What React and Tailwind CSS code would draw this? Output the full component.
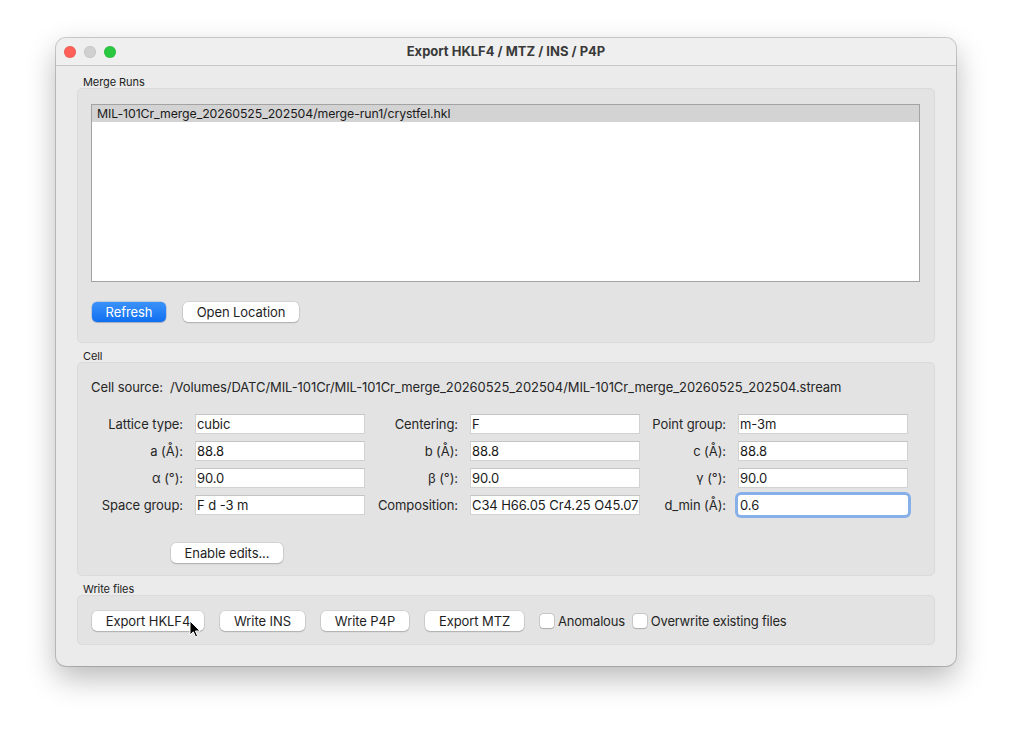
import React from "react";

function MacButton({ children, className = "" }) {
  return (
    <div
      className={
        "h-[20px] flex items-center justify-center pt-[1px] rounded-[5px] bg-white text-[13px] text-[#1e1e1e] shadow-[0_0_0_0.5px_rgba(0,0,0,0.14),0_1px_1.5px_rgba(0,0,0,0.18)] " +
        className
      }
    >
      {children}
    </div>
  );
}

function Field({ value, focused }) {
  if (focused) {
    return (
      <div className="h-[20px] rounded-[3px] bg-white shadow-[0_0_0_3px_#87b0e8] flex items-center pt-[2px] pl-[2px] text-[13px] text-[#1a1a1a] whitespace-nowrap overflow-hidden">
        {value}
      </div>
    );
  }
  return (
    <div className="h-[20px] bg-white border border-[#d2d2d2] border-t-[#c4c4c4] flex items-center pt-[2px] pl-[1px] text-[13px] text-[#1a1a1a] whitespace-nowrap overflow-hidden">
      {value}
    </div>
  );
}

function Label({ children }) {
  return (
    <div className="h-[20px] flex items-center justify-end pt-[2px] text-[13px] text-[#262626] whitespace-nowrap">
      {children}
    </div>
  );
}

function GroupTitle({ children }) {
  return (
    <div className="h-[19px] flex items-end pl-[6px]">
      <span className="text-[11px] leading-[11px] text-[#222]">{children}</span>
    </div>
  );
}

function Checkbox({ label }) {
  return (
    <div className="flex items-center gap-[4px]">
      <div className="w-[14px] h-[14px] rounded-[3px] bg-white shadow-[0_0_0_0.5px_rgba(0,0,0,0.22),0_0.5px_1px_rgba(0,0,0,0.15)]" />
      <span className="text-[13px] text-[#262626] pt-[1px] tracking-[-0.2px]">{label}</span>
    </div>
  );
}

export default function App() {
  const rows = [
    ["Lattice type:", "cubic", "Centering:", "F", "Point group:", "m-3m"],
    ["a (Å):", "88.8", "b (Å):", "88.8", "c (Å):", "88.8"],
    ["α (°):", "90.0", "β (°):", "90.0", "γ (°):", "90.0"],
    ["Space group:", "F d -3 m", "Composition:", "C34 H66.05 Cr4.25 O45.07", "d_min (Å):", "0.6"],
  ];
  return (
    <div className="min-h-screen w-full bg-white pt-[38px] pl-[56px] font-[Inter,'Noto_Sans',sans-serif] tracking-[-0.08px]">
      <div className="relative w-[900px] h-[628px] rounded-[10px] bg-[#ebebeb] overflow-hidden flex flex-col shadow-[0_0_0_1px_rgba(0,0,0,0.18),0_12px_30px_rgba(0,0,0,0.28)]">
        {/* title bar */}
        <div className="h-[28px] shrink-0 grid grid-cols-[1fr_auto_1fr] items-center bg-[#efefef] border-b border-[#c8c8c8]">
          <div className="flex items-center gap-[8px] pl-[8px]">
            <div className="w-[12px] h-[12px] rounded-full bg-[#fe5f57] shadow-[inset_0_0_0_0.5px_rgba(0,0,0,0.12)]" />
            <div className="w-[12px] h-[12px] rounded-full bg-[#d0d0d0] shadow-[inset_0_0_0_0.5px_rgba(0,0,0,0.1)]" />
            <div className="w-[12px] h-[12px] rounded-full bg-[#2ac840] shadow-[inset_0_0_0_0.5px_rgba(0,0,0,0.12)]" />
          </div>
          <div className="text-[13px] font-bold tracking-normal text-[#3a3a3a]">Export HKLF4 / MTZ / INS / P4P</div>
          <div />
        </div>

        {/* body */}
        <div className="flex-1 px-[21px] pt-[3px] flex flex-col">
          <GroupTitle>Merge Runs</GroupTitle>
          <div className="h-[255px] rounded-[5px] bg-[#e3e3e3] border border-[#dadada] pt-[15px] pl-[13px] pr-[14px] flex flex-col">
            <div className="h-[178px] bg-white border border-[#a3a3a3]">
              <div className="h-[17px] bg-[#d3d3d3] flex items-center pt-[1px] pl-[5px] text-[12.3px] text-[#1a1a1a]">
                MIL-101Cr_merge_20260525_202504/merge-run1/crystfel.hkl
              </div>
            </div>
            <div className="flex items-center gap-[17px] mt-[20px] ml-[1px]">
              <div className="w-[74px] h-[20px] pt-[1px] rounded-[5px] flex items-center justify-center text-[13px] text-white bg-gradient-to-b from-[#3a92fa] to-[#0d6ff0] shadow-[0_0_0_0.5px_rgba(0,60,180,0.3),0_1px_1px_rgba(0,0,0,0.15)]">
                Refresh
              </div>
              <MacButton className="w-[116px]">Open Location</MacButton>
            </div>
          </div>

          <GroupTitle>Cell</GroupTitle>
          <div className="h-[214px] rounded-[5px] bg-[#e3e3e3] border border-[#dadada] pt-[16px] pl-[13px] flex flex-col">
            <div className="h-[18px] flex items-center text-[13px] text-[#262626] whitespace-nowrap">
              <span className="w-[79px] shrink-0">Cell source:</span>
              <span>/Volumes/DATC/MIL-101Cr/MIL-101Cr_merge_20260525_202504/MIL-101Cr_merge_20260525_202504.stream</span>
            </div>
            <div className="mt-[17px] grid grid-cols-[92px_170px_81px_170px_74px_170px] gap-x-[12px] gap-y-[7px]">
              {rows.map((r, i) => (
                <React.Fragment key={i}>
                  <Label>{r[0]}</Label>
                  <Field value={r[1]} />
                  <Label>{r[2]}</Label>
                  <Field value={r[3]} />
                  <Label>{r[4]}</Label>
                  <Field value={r[5]} focused={i === 3} />
                </React.Fragment>
              ))}
            </div>
            <div className="mt-[28px] ml-[80px]">
              <MacButton className="w-[112px]">Enable edits...</MacButton>
            </div>
          </div>

          <GroupTitle>Write files</GroupTitle>
          <div className="h-[50px] rounded-[5px] bg-[#e3e3e3] border border-[#dadada] pt-[15px] pl-[14px] flex items-start">
            <div className="flex items-center">
              <div className="relative">
                <MacButton className="w-[112px]">Export HKLF4</MacButton>
                <svg
                  className="absolute left-[97px] top-[9px]"
                  width="12"
                  height="19"
                  viewBox="0 0 12 19"
                >
                  <path
                    d="M1 1 L1 15 L4.3 11.8 L6.6 17 L8.6 16.1 L6.4 11 L11 11 Z"
                    fill="#000"
                    stroke="#fff"
                    strokeWidth="1"
                    strokeLinejoin="round"
                  />
                </svg>
              </div>
              <MacButton className="w-[85px] ml-[16px]">Write INS</MacButton>
              <MacButton className="w-[88px] ml-[16px]">Write P4P</MacButton>
              <MacButton className="w-[99px] ml-[16px]">Export MTZ</MacButton>
              <div className="ml-[16px]">
                <Checkbox label="Anomalous" />
              </div>
              <div className="ml-[8px]">
                <Checkbox label="Overwrite existing files" />
              </div>
            </div>
          </div>
        </div>
      </div>
    </div>
  );
}
